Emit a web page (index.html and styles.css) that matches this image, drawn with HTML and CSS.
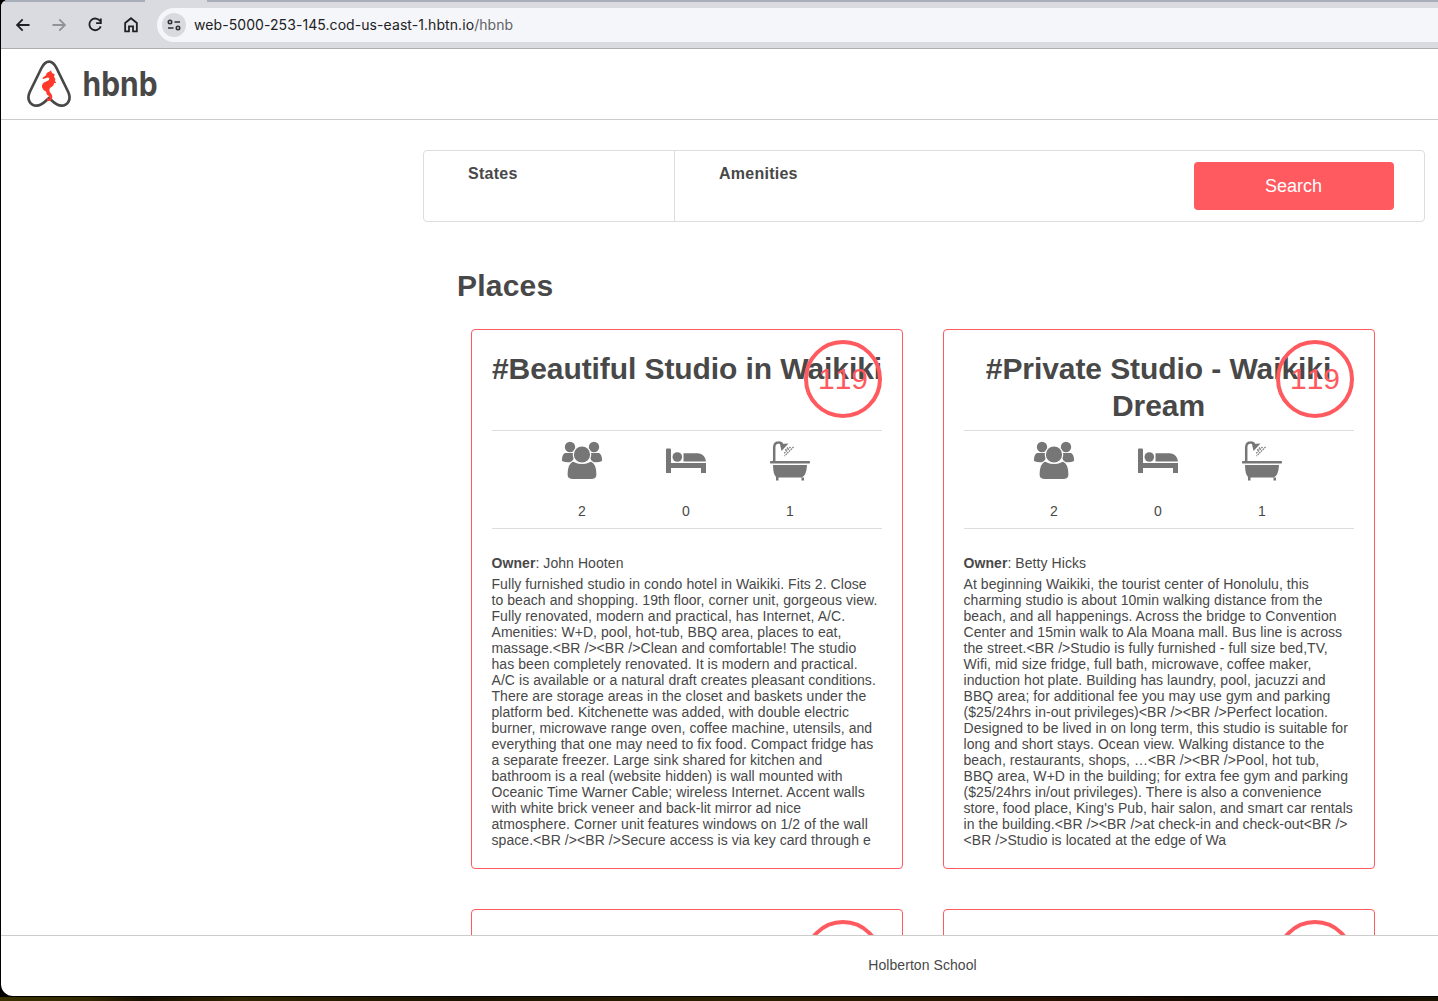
FILE: index.html
```html
<!DOCTYPE html>
<html lang="en">
<head>
<meta charset="utf-8">
<title>hbnb</title>
<link rel="stylesheet" href="styles.css">
</head>
<body>
<svg width="0" height="0" class="defs">
  <symbol id="guests" viewBox="0 0 40 40">
    <g fill="#767676"><circle cx="8" cy="6" r="5.2"/><circle cx="32" cy="6" r="5.2"/>
    <path d="M3 12C0 14 0 17 0 20Q4 22 10 21L14 12Q8 12 3 12Z"/><path d="M37 12C40 14 40 17 40 20Q36 22 30 21L26 12Q32 12 37 12Z"/></g>
    <g fill="#767676" stroke="#fff" stroke-width="1.2"><path d="M11 20Q20 25 29 20C34 22 35 29 35 33.500Q35 38.500 30 38.500H10Q5 38.500 5 33.500C5 29 6 22 11 20Z"/><circle cx="20" cy="13.500" r="8.700"/></g>
  </symbol>
  <symbol id="bed" viewBox="0 0 40 40">
    <g fill="#767676"><path d="M0 8.500Q0 7.500 1 7.500H4Q5 7.500 5 8.500V22H40V32H35V27H5V32H0Z"/><circle cx="11.300" cy="16" r="4.800"/><path d="M17.500 12.300H32Q39 13 40 20.500H17.500Z"/></g>
  </symbol>
  <symbol id="bath" viewBox="0 0 40 40">
    <path d="M4.200 20V6Q4.500 1.600 8.500 1.600Q11.500 1.500 12 3.500" fill="none" stroke="#767676" stroke-width="2.500"/>
    <path d="M10 3L18.500 2.500L11.500 10Z" fill="#767676"/>
    <path d="M18 6.500L15 9.500M20.500 6L14 12.500M23.500 6L14.500 15" fill="none" stroke="#767676" stroke-width="1.200" stroke-dasharray="1.600 .8"/>
    <path d="M.5 20H39.500Q40 20 40 21.300Q40 22.500 39.500 22.500H.5Q0 22.500 0 21.300Q0 20 .5 20ZM3 24H37Q36.500 35 31.500 36.500H34V39.500H31.500V36.500H8.500V39.500H6V36Q3 33 3 24Z" fill="#767676"/>
  </symbol>
</svg>
<div class="window">
  <div class="tabs"><span class="tab"></span></div>
  <div class="toolbar">
    <svg class="nav" viewBox="0 0 16 16"><path d="M13.800 8H3M7.700 3L2.700 8L7.700 13"/></svg>
    <svg class="nav off" viewBox="0 0 16 16"><path d="M2.200 8H13M8.300 3L13.300 8L8.300 13"/></svg>
    <svg class="nav" viewBox="0 0 16 16"><path d="M12.700 4.800A5.200 5.200 0 1 0 13.100 9.200M13.200 2.200V6.300H9"/></svg>
    <svg class="nav" viewBox="0 0 16 16"><path d="M2.800 13.700V6.200L8 2L13.200 6.200V13.700H9.800V9.300H6.200V13.700Z"/></svg>
    <div class="address">
      <span class="site"><svg width="14" height="14" viewBox="0 0 14 14" fill="none" stroke="#303236" stroke-width="1.600"><circle cx="3" cy="4" r="1.700"/><path d="M7.500 4H13M1 10H6.500"/><circle cx="11" cy="10" r="1.700"/></svg></span>
      <span class="url">web-5000-253-145.cod-us-east-1.hbtn.io<span class="path">/hbnb</span></span>
    </div>
  </div>
  <header>
    <svg class="logo" width="150" height="60" viewBox="0 0 150 60">
      <path d="M30 7.700C26 7.700 24.300 10.500 22.500 14L11 37.500C7 45.500 11.500 51.700 17.500 51.700C23 51.700 26.500 47 30 44C33.500 47 37 51.700 42.500 51.700C48.500 51.700 53 45.500 49 37.500L37.500 14C35.700 10.500 34 7.700 30 7.700Z" fill="none" stroke="#484848" stroke-width="2.700"/>
      <path transform="translate(17 12) scale(.3333)" d="M45 13L48 21L56 25L54 32L58 39L57 45L61 52L54 51C54 60 48 62 43 65C38 69 40 76 44 82C51 88 51 102 41 105C33 106 30 99 35 95L39 99Q43 97 39 90C33 87 30 83 31 77C20 72 15 62 20 53C26 45 40 46 40 38Q38 33 33 35L22 39L19 36L30 28Q31 19 40 17Z" fill="#ff3a2a"/>
      <text x="63.500" y="42" textLength="75" lengthAdjust="spacingAndGlyphs">hbnb</text>
    </svg>
  </header>
  <main>
    <section class="filters">
      <h3 class="states">States</h3>
      <h3 class="amenities">Amenities</h3>
      <button>Search</button>
    </section>
    <section class="places">
      <h1>Places</h1>
      <div class="grid">
        <article>
          <h2>#Beautiful Studio in Waikiki</h2><div class="price">119</div>
          <div class="info"><div><svg><use href="#guests"/></svg>2</div><div><svg><use href="#bed"/></svg>0</div><div><svg><use href="#bath"/></svg>1</div></div>
          <p class="owner"><b>Owner</b>: John Hooten</p>
          <p class="description">Fully furnished studio in condo hotel in Waikiki. Fits 2. Close
to beach and shopping. 19th floor, corner unit, gorgeous view.
Fully renovated, modern and practical, has Internet, A/C.
Amenities: W+D, pool, hot-tub, BBQ area, places to eat,
massage.&lt;BR /&gt;&lt;BR /&gt;Clean and comfortable! The studio
has been completely renovated. It is modern and practical.
A/C is available or a natural draft creates pleasant conditions.
There are storage areas in the closet and baskets under the
platform bed. Kitchenette was added, with double electric
burner, microwave range oven, coffee machine, utensils, and
everything that one may need to fix food. Compact fridge has
a separate freezer. Large sink shared for kitchen and
bathroom is a real (website hidden) is wall mounted with
Oceanic Time Warner Cable; wireless Internet. Accent walls
with white brick veneer and back-lit mirror ad nice
atmosphere. Corner unit features windows on 1/2 of the wall
space.&lt;BR /&gt;&lt;BR /&gt;Secure access is via key card through e</p>
        </article>
        <article>
          <h2>#Private Studio - Waikiki<br>Dream</h2><div class="price">119</div>
          <div class="info"><div><svg><use href="#guests"/></svg>2</div><div><svg><use href="#bed"/></svg>0</div><div><svg><use href="#bath"/></svg>1</div></div>
          <p class="owner"><b>Owner</b>: Betty Hicks</p>
          <p class="description">At beginning Waikiki, the tourist center of Honolulu, this
charming studio is about 10min walking distance from the
beach, and all happenings. Across the bridge to Convention
Center and 15min walk to Ala Moana mall. Bus line is across
the street.&lt;BR /&gt;Studio is fully furnished - full size bed,TV,
Wifi, mid size fridge, full bath, microwave, coffee maker,
induction hot plate. Building has laundry, pool, jacuzzi and
BBQ area; for additional fee you may use gym and parking
($25/24hrs in-out privileges)&lt;BR /&gt;&lt;BR /&gt;Perfect location.
Designed to be lived in on long term, this studio is suitable for
long and short stays. Ocean view. Walking distance to the
beach, restaurants, shops, …&lt;BR /&gt;&lt;BR /&gt;Pool, hot tub,
BBQ area, W+D in the building; for extra fee gym and parking
($25/24hrs in/out privileges). There is also a convenience
store, food place, King's Pub, hair salon, and smart car rentals
in the building.&lt;BR /&gt;&lt;BR /&gt;at check-in and check-out&lt;BR /&gt;
&lt;BR /&gt;Studio is located at the edge of Wa</p>
        </article>
        <article><div class="price"></div></article>
        <article><div class="price"></div></article>
      </div>
    </section>
  </main>
  <footer>Holberton School</footer>
</div>
<div class="desktop"></div>
</body>
</html>
```

FILE: styles.css
```css
* { box-sizing: border-box; }
html { overflow: hidden; }
body { margin: 0; width: 1438px; height: 1001px; overflow: hidden; background: #000; color: #484848; font: 14px/16px "Liberation Sans", Arial, sans-serif; }
.defs { display: block; }
.window { display: flex; flex-direction: column; width: 1437px; height: 996px; margin-left: 1px; background: #fff; border-radius: 7px 0 0 12px; overflow: hidden; }
.tabs { height: 2px; flex: none; background: #a8adba; }
.tab { display: block; width: 62px; height: 2px; margin-left: 144px; background: #dadbe1; }
.toolbar { display: flex; align-items: center; flex: none; height: 47px; padding: 0 0 1px 13px; gap: 18px; background: #dadbe0; border-bottom: 1px solid #aeaeb2; }
.nav { width: 18px; height: 18px; flex: none; fill: none; stroke: #202124; stroke-width: 1.600; }
.off { stroke: #919297; }
.address { display: flex; align-items: center; flex: 1; height: 34px; margin-left: -1px; padding-left: 5px; gap: 8px; border-radius: 17px 0 0 17px; background: #f5f6f9; }
.site { display: grid; place-items: center; width: 24px; height: 24px; border-radius: 50%; background: #d9dae0; }
.url { font: 14px/20px Inter, sans-serif; letter-spacing: .07px; color: #202124; }
.path { color: #606267; }
header { flex: none; height: 71px; padding: 5px 0 0 18px; border-bottom: 1px solid #ccc; }
.logo { display: block; }
.logo text { font: 700 33.500px Inter, sans-serif; fill: #484848; }
main { flex: 1; min-height: 0; width: 1002px; margin: 30px 0 0 422px; overflow: hidden; }
.filters { display: flex; height: 72px; border: 1px solid #ddd; border-radius: 4px; }
.filters h3 { margin: 0; padding: 13px 0 0 44px; font-size: 16px; line-height: 19px; letter-spacing: .25px; }
.states { width: 251px; border-right: 1px solid #ddd; }
.filters button { width: 200px; height: 48px; margin: 11px 30px 0 auto; padding: 0 1px 0 0; border: 0; border-radius: 4px; background: #ff5a5f; color: #fff; font: 18px/48px "Liberation Sans", Arial, sans-serif; }
.places { padding: 45px 28px 0 34px; }
h1 { margin: 0; font-size: 30px; line-height: 37px; letter-spacing: .2px; }
.grid { display: grid; grid-template-columns: 432px 432px; grid-auto-rows: 540px; gap: 40px; padding: 25px 0 0 14px; }
article { position: relative; padding: 20px; border: 1px solid #ff5a5f; border-radius: 4px; }
h2 { height: 80px; margin: 0; padding-right: 1px; font-size: 30px; line-height: 37px; letter-spacing: -.08px; text-align: center; white-space: nowrap; }
.price { position: absolute; right: 20px; top: 10px; width: 78px; height: 78px; border: 4px solid #ff5a5f; border-radius: 50%; color: #ff5a5f; font-size: 30px; font-kerning: none; line-height: 70px; text-align: center; }
.info { display: flex; justify-content: center; gap: 4px; height: 99px; padding: 10px 2px 0 0; border-top: 1px solid #ddd; border-bottom: 1px solid #ddd; text-align: center; }
.info div { width: 100px; }
.info svg { display: block; width: 40px; height: 40px; margin: 0 auto 22px; }
.owner { margin: 26px 0 5px -.5px; letter-spacing: .07px; }
.description { margin: 0 0 0 -.5px; letter-spacing: .06px; white-space: pre; }
footer { flex: none; width: 1843px; height: 61px; border-top: 1px solid #ccc; line-height: 59px; letter-spacing: .07px; text-align: center; }
.desktop { height: 5px; border-top: 1px solid #000; background: linear-gradient(90deg, #393100, #332900 6%, #181000 10%, #302600 17%, #1b1300 32%, #2b2100 50%, #241000 75%, #0c0700 90%, #1b1300); }
```
